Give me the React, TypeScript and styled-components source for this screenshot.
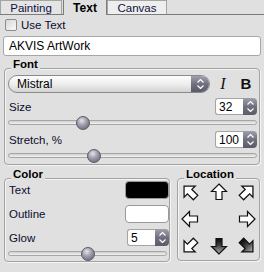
import React from 'react'
import styled, { createGlobalStyle } from 'styled-components'

const GlobalStyle = createGlobalStyle`
  html, body {
    margin: 0;
    padding: 0;
    background: #e0e0e0;
  }
  body {
    font-family: 'Liberation Sans', Arial, sans-serif;
    font-size: 11.5px;
    color: #0c0c2c;
  }
`

const Panel = styled.div`
  width: 264px;
  height: 272px;
  background: #e0e0e0;
  overflow: hidden;
  display: flex;
  flex-direction: column;
`

const TabBar = styled.div`
  display: flex;
  align-items: flex-end;
  height: 14px;
  border-bottom: 1px solid #7c7c7c;
`

const Tab = styled.div<{ $active?: boolean; $w: number; $bg?: string }>`
  box-sizing: border-box;
  width: ${p => p.$w}px;
  height: ${p => (p.$active ? 16 : 14)}px;
  margin-bottom: ${p => (p.$active ? -1 : 0)}px;
  margin-left: ${p => (p.$active ? 1 : 0)}px;
  border: 1px solid ${p => (p.$active ? '#7c7c7c' : '#a4a4a4')};
  border-bottom: none;
  background: ${p => p.$bg || '#e0e0e0'};
  display: flex;
  align-items: center;
  justify-content: center;
  padding-top: ${p => (p.$active ? 0 : 1)}px;
  font-size: ${p => (p.$active ? 12 : 11.5)}px;
  font-weight: ${p => (p.$active ? 'bold' : 'normal')};
  color: ${p => (p.$active ? '#000' : '#101040')};
`

const Body = styled.div`
  display: flex;
  flex-direction: column;
  padding: 0 4px 0 3px;
`

const CheckRow = styled.label`
  display: flex;
  align-items: center;
  gap: 4px;
  margin: 3px 0 0 2px;
  height: 13px;
`

const CheckBox = styled.span`
  width: 12px;
  height: 12px;
  box-sizing: border-box;
  border: 1px solid #8c8c8c;
  border-radius: 2px;
  background: linear-gradient(135deg, #d6d6d6, #fafafa);
`

const TextInput = styled.div`
  margin-top: 5px;
  height: 20px;
  width: 258px;
  box-sizing: border-box;
  border: 1px solid #a6a6a6;
  border-radius: 3px;
  background: #fff;
  padding-left: 5px;
  display: flex;
  align-items: center;
  color: #000;
  font-size: 12px;
`

const Group = styled.div<{ $w: number; $h?: number }>`
  position: relative;
  box-sizing: border-box;
  width: ${p => p.$w}px;
  ${p => (p.$h ? `height: ${p.$h}px;` : '')}
  border: 1px solid #a2a2a2;
  border-radius: 4px;
  box-shadow: inset 1px 1px 0 #f4f4f4, 1px 1px 0 #f4f4f4;
`

const Legend = styled.span`
  position: absolute;
  top: -12px;
  left: 6px;
  padding: 0 2px;
  line-height: 14px;
  background: #e0e0e0;
  font-weight: bold;
  font-size: 11.5px;
  color: #000;
`

const FontGroup = styled(Group)`
  margin: 12px 0 0 1px;
  padding: 6px 2px 1px 3px;
  display: flex;
  flex-direction: column;
`

const Row = styled.div<{ $mt?: number; $h?: number }>`
  display: flex;
  align-items: center;
  justify-content: space-between;
  margin-top: ${p => p.$mt || 0}px;
  height: ${p => p.$h || 17}px;
`

const Select = styled.div`
  box-sizing: border-box;
  width: 202px;
  height: 18px;
  display: flex;
  border: 1px solid #8a8a8a;
  border-radius: 9px;
  overflow: hidden;
  background: linear-gradient(#fdfdfd, #ececec 55%, #d2d2d2);
`

const SelectText = styled.span`
  flex: 1;
  padding-left: 8px;
  line-height: 16px;
  color: #000;
  font-size: 12px;
`

const DarkButton = styled.span<{ $w: number }>`
  width: ${p => p.$w}px;
  background: linear-gradient(#a0a0ac, #707080 50%, #5a5a68);
  display: flex;
  flex-direction: column;
  align-items: center;
  justify-content: center;
  gap: 2px;
`

const StyleButton = styled.span<{ $italic?: boolean }>`
  width: 20px;
  text-align: center;
  color: #111;
  font-family: ${p => (p.$italic ? "'Liberation Serif', serif" : "'Liberation Sans', Arial, sans-serif")};
  font-style: ${p => (p.$italic ? 'italic' : 'normal')};
  font-weight: ${p => (p.$italic ? 'normal' : 'bold')};
  font-size: ${p => (p.$italic ? 16 : 15)}px;
`

const Tools = styled.div`
  display: flex;
  gap: 3px;
  margin-right: 1px;
`

const SpinBox = styled.div<{ $w: number }>`
  width: ${p => p.$w}px;
  height: 17px;
  display: flex;
`

const SpinField = styled.span`
  flex: 1;
  box-sizing: border-box;
  background: #fff;
  border: 1px solid #a4a4a4;
  border-right: none;
  border-radius: 3px 0 0 3px;
  padding-left: 3px;
  display: flex;
  align-items: center;
  color: #000;
  font-size: 12px;
`

const SpinButtons = styled(DarkButton)`
  border-radius: 0 4px 4px 0;
  gap: 3px;
`

const Track = styled.div<{ $w: number }>`
  position: relative;
  width: ${p => p.$w}px;
  height: 14px;
  &::before {
    content: '';
    position: absolute;
    left: 0;
    right: 0;
    top: 4px;
    height: 5px;
    box-sizing: border-box;
    border: 1px solid #a6a6a6;
    border-radius: 3px;
    background: linear-gradient(#cfcfcf, #f2f2f2);
  }
`

const Thumb = styled.span`
  position: absolute;
  top: 0;
  width: 14px;
  height: 14px;
  border-radius: 50%;
  box-sizing: border-box;
  border: 1px solid #5a5a66;
  background: radial-gradient(circle at 40% 30%, #e4e4ea, #9a9aa8 45%, #5c5c6c);
`

const Bottom = styled.div`
  display: flex;
  align-items: flex-start;
  gap: 7px;
  margin: 13px 0 0 1px;
`

const ColorGroup = styled(Group)`
  padding: 2px 0 0 3px;
  display: flex;
  flex-direction: column;
`

const Swatch = styled.span<{ $color: string }>`
  width: 44px;
  height: 18px;
  box-sizing: border-box;
  border: 1px solid #9a9a9a;
  border-radius: 4px;
  background: ${p => p.$color};
`

const Label = styled.span`
  padding-left: 1px;
`

const ArrowGrid = styled.div`
  display: grid;
  grid-template-columns: repeat(3, 24px);
  grid-auto-rows: 22px;
  column-gap: 4.5px;
  row-gap: 5px;
  padding-top: 2px;
  place-items: center;
`

const Tri = ({ up }: { up?: boolean }) => (
  <svg width="7" height="4" viewBox="0 0 7 4">
    <path d={up ? 'M0.5 3.5 L3.5 0.5 L6.5 3.5' : 'M0.5 0.5 L3.5 3.5 L6.5 0.5'} fill="none" stroke="#fff" strokeWidth="1.2" />
  </svg>
)

const Spin = ({ value, w }: { value: string; w: number }) => (
  <SpinBox $w={w}>
    <SpinField>{value}</SpinField>
    <SpinButtons $w={14}>
      <Tri up />
      <Tri />
    </SpinButtons>
  </SpinBox>
)

const Slider = ({ w, at }: { w: number; at: number }) => (
  <Track $w={w}>
    <Thumb style={{ left: `calc(${at * 100}% - 7px)` }} />
  </Track>
)

const Arrow = ({ angle, dark }: { angle: number; dark?: boolean }) => {
  const id = `g${angle}`
  const diag = angle % 90 !== 0
  return (
    <svg width="18" height="18" viewBox="0 0 18 18">
      <defs>
        <linearGradient id={id} x1="0" y1="0" x2="0" y2="1">
          <stop offset="0" stopColor="#b4b4b4" />
          <stop offset="0.6" stopColor="#3a3a3a" />
          <stop offset="1" stopColor="#0a0a0a" />
        </linearGradient>
      </defs>
      <g transform={`rotate(${angle} 9 9)${diag ? ' translate(9 9) scale(1.05) translate(-9 -9)' : ''}`}>
        <path
          d="M9 1 L16.5 8.5 L12 8.5 L12 16.5 L6 16.5 L6 8.5 L1.5 8.5 Z"
          fill={dark ? `url(#${id})` : '#fff'}
          stroke="#111"
          strokeWidth="1.2"
          strokeLinejoin="miter"
        />
      </g>
    </svg>
  )
}

const App: React.FC = () => (
  <>
    <GlobalStyle />
    <Panel>
      <TabBar>
        <Tab $w={62} $bg="#e4e4e4">Painting</Tab>
        <Tab $w={44} $active>Text</Tab>
        <Tab $w={60} $bg="#eeeeee">Canvas</Tab>
      </TabBar>
      <Body>
        <CheckRow>
          <CheckBox />
          Use Text
        </CheckRow>
        <TextInput>AKVIS ArtWork</TextInput>

        <FontGroup $w={256}>
          <Legend>Font</Legend>
          <Row $h={18}>
            <Select>
              <SelectText>Mistral</SelectText>
              <DarkButton $w={18}>
                <Tri up />
                <Tri />
              </DarkButton>
            </Select>
            <Tools>
              <StyleButton $italic>I</StyleButton>
              <StyleButton>B</StyleButton>
            </Tools>
          </Row>
          <Row $mt={5}>
            <Label>Size</Label>
            <Spin value="32" w={42} />
          </Row>
          <Row $mt={1} $h={14}>
            <Slider w={249} at={0.3} />
          </Row>
          <Row $mt={1}>
            <Label>Stretch, %</Label>
            <Spin value="100" w={42} />
          </Row>
          <Row $mt={1} $h={14}>
            <Slider w={249} at={0.345} />
          </Row>
        </FontGroup>

        <Bottom>
          <ColorGroup $w={166}>
            <Legend>Color</Legend>
            <Row $h={18}>
              <Label>Text</Label>
              <Swatch $color="#000" />
            </Row>
            <Row $h={18} $mt={6}>
              <Label>Outline</Label>
              <Swatch $color="#fff" />
            </Row>
            <Row $mt={6}>
              <Label>Glow</Label>
              <Spin value="5" w={42} />
            </Row>
            <Row $mt={1} $h={14}>
              <Slider w={159} at={0.5} />
            </Row>
          </ColorGroup>

          <Group $w={83} $h={83}>
            <Legend>Location</Legend>
            <ArrowGrid>
              <Arrow angle={-45} />
              <Arrow angle={0} />
              <Arrow angle={45} />
              <Arrow angle={-90} />
              <span />
              <Arrow angle={90} />
              <Arrow angle={-135} />
              <Arrow angle={180} dark />
              <Arrow angle={135} dark />
            </ArrowGrid>
          </Group>
        </Bottom>
      </Body>
    </Panel>
  </>
)

export default App
